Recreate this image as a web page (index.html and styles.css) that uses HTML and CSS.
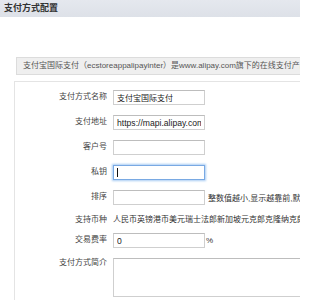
FILE: index.html
```html
<!DOCTYPE html>
<html lang="zh-CN">
<head>
<meta charset="utf-8">
<title>支付方式配置</title>
<link rel="stylesheet" href="styles.css">
</head>
<body>
<div class="header">支付方式配置</div>
<div class="content">
  <div class="notice">支付宝国际支付（ecstoreappalipayinter）是www.alipay.com旗下的在线支付产品</div>
  <div class="panel">
    <div class="row">
      <label class="label">支付方式名称</label>
      <input class="field" type="text" value="支付宝国际支付">
    </div>
    <div class="row">
      <label class="label">支付地址</label>
      <input class="field field-latin" type="text" value="https://mapi.alipay.com">
    </div>
    <div class="row">
      <label class="label">客户号</label>
      <input class="field" type="text" value="">
    </div>
    <div class="row">
      <label class="label">私钥</label>
      <div class="focus-wrap">
        <input class="field focused" type="text" value="">
        <span class="caret"></span>
      </div>
    </div>
    <div class="row">
      <label class="label">排序</label>
      <div class="inline">
        <input class="field" type="text" value="">
        <span class="hint">整数值越小,显示越靠前,默认值为1</span>
      </div>
    </div>
    <div class="row row-text">
      <label class="label">支持币种</label>
      <span class="value">人民币英镑港币美元瑞士法郎新加坡元克郎克隆纳克朗</span>
    </div>
    <div class="row">
      <label class="label">交易费率</label>
      <div class="inline">
        <input class="field field-latin" type="text" value="0">
        <span class="unit">%</span>
      </div>
    </div>
    <div class="row row-area">
      <label class="label">支付方式简介</label>
      <textarea class="area"></textarea>
    </div>
  </div>
</div>
</body>
</html>
```
FILE: styles.css
```css
html, body {
  margin: 0;
  padding: 0;
  background: #ffffff;
  overflow: hidden;
  width: 300px;
  height: 300px;
}
body {
  font-family: "Liberation Sans", "Noto Sans CJK SC", sans-serif;
  font-size: 8px;
  color: #333;
}
.header {
  height: 17px;
  line-height: 17px;
  padding-left: 4px;
  font-size: 9px;
  font-weight: bold;
  color: #333;
  background: linear-gradient(#e5e8ee, #dde1e8);
}
.content {
  padding-top: 40px;
  height: 243px;
  overflow: hidden;
}
.notice {
  box-sizing: border-box;
  margin-left: 16px;
  width: 284px;
  height: 18px;
  line-height: 16px;
  padding-left: 6px;
  border: 1px solid #dcdcdc;
  border-right: none;
  background: #efefef;
  color: #555;
  white-space: nowrap;
  overflow: hidden;
}
.panel {
  box-sizing: border-box;
  margin-top: 6px;
  margin-left: 14px;
  width: 286px;
  height: 219px;
  border-top: 1px solid #e4e4e4;
  border-left: 1px solid #e4e4e4;
  padding-top: 8px;
  background: #fff;
  overflow: hidden;
}
.row {
  display: grid;
  grid-template-columns: 92px minmax(0, 1fr);
  column-gap: 6px;
  margin-bottom: 10px;
  align-items: start;
}
.label {
  text-align: right;
  line-height: 14px;
  color: #444;
  white-space: nowrap;
}
.field {
  box-sizing: border-box;
  flex: none;
  width: 92px;
  height: 15px;
  margin: 0;
  padding: 0 3px;
  border: 1px solid #cfcfcf;
  border-top-color: #bdbdbd;
  background: #fff;
  font-family: "Liberation Sans", "Noto Sans CJK SC", sans-serif;
  font-size: 8px;
  color: #222;
  outline: none;
  overflow: hidden;
}
.field-latin {
  font-size: 8.6px;
}
.focus-wrap {
  position: relative;
  width: 92px;
  height: 15px;
}
.focused {
  border: 1px solid #79a9e3;
  box-shadow: 0 0 2px 1px #a9ccf3;
}
.caret {
  position: absolute;
  left: 4px;
  top: 3px;
  width: 1px;
  height: 9px;
  background: #111;
}
.inline {
  display: flex;
  align-items: center;
  white-space: nowrap;
  overflow: hidden;
}
.hint {
  margin-left: 3px;
  color: #333;
  overflow: hidden;
}
.unit {
  margin-left: 1px;
  color: #333;
}
.row-text {
  margin-bottom: 8px;
}
.row-text .label,
.row-text .value {
  line-height: 10px;
}
.value {
  white-space: nowrap;
  overflow: hidden;
  color: #333;
}
.row-area .label {
  line-height: 10px;
}
.area {
  box-sizing: border-box;
  width: 100%;
  height: 39px;
  margin: 0;
  border: 1px solid #cfcfcf;
  border-top-color: #bdbdbd;
  border-right: none;
  resize: none;
  font-size: 8px;
}
```
